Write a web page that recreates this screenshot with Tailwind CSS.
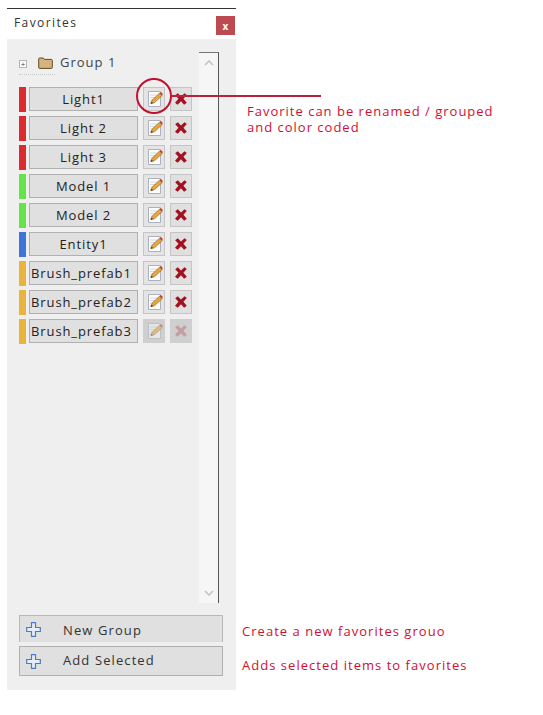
<!DOCTYPE html>
<html lang="en">
<head>
<meta charset="UTF-8" />
<title>Favorites</title>
<script src="https://cdn.jsdelivr.net/npm/@tailwindcss/browser@4"></script>
</head>
<body class="bg-white">
<svg width="0" height="0" class="absolute">
  <defs>
    <symbol id="edit" viewBox="0 0 18 18">
      <path d="M3.500 1.500h12v15h-12z" fill="#fdfdfd" stroke="#aab2c0" stroke-width="1"/>
      <path d="M5 5h7M5 7.500h5M5 10h3M5 12.500h2" stroke="#c8ccd4" stroke-width="0.8"/>
      <path d="M5.800 13.800l1.300-3.600 7.600-7.200 2.500 2.600-7.600 7z" fill="#eaa63c" stroke="#8f6324" stroke-width="0.7"/>
      <path d="M14.700 3l1.200-1.100 2 2-1.300 1.700z" fill="#c53a2e"/>
      <path d="M5.800 13.800l.6-2 1.800 1.200z" fill="#4d3c2a"/>
    </symbol>
    <symbol id="del" viewBox="0 0 12 12">
      <path d="M.2 2.300L2.800.3 6 3.400 9.500.2 11.800 2 8.400 5.800l3.400 4-2.700 2L6 8.200l-3.300 3.600L0 9.700l3.500-3.900z" fill="#a3101f"/>
    </symbol>
    <symbol id="plus" viewBox="0 0 15 15">
      <path d="M5.500.7h4v4.800h4.800v4h-4.800v4.800h-4v-4.800H.7v-4h4.800z" fill="#e6eef9" stroke="#4a7cc4" stroke-width="1.200"/>
    </symbol>
  </defs>
</svg>

<div class="relative flex w-[543px] h-[715px] pl-[7px] pt-[8px] font-['Open_Sans',sans-serif] overflow-hidden">
  <div class="w-[229px] h-[682px] flex flex-col border-t border-[#333]">
    <div class="h-[30px] flex justify-between items-start pl-[7px] pr-px">
      <span class="mt-[5px] text-[12px] leading-[18px] tracking-[1.4px] text-[#333]">Favorites</span>
      <span class="mt-[7px] w-[19px] h-[19px] flex items-center justify-center bg-[#bd4a50] text-white text-[10px] font-bold leading-none">x</span>
    </div>
    <div class="h-[651px] bg-[#efefef] flex flex-col pl-[12px] pr-[13px]">
      <div class="h-[551px] mt-[13px] flex">
        <div class="w-[180px] flex flex-col">
          <div class="h-[22px] flex items-center">
            <span class="w-[8px] h-[8px] mt-px flex items-center justify-center border border-[#b5b5b5] bg-white text-[8px] leading-none text-[#444]">+</span>
            <svg class="ml-[11px] w-[15px] h-[12px]" viewBox="0 0 15 12"><path d="M.7 10.500V2q0-1 1-1h3.600l1 1.400h7q1 0 1 1v7q0 1-1 1H1.700q-1 0-1-1z" fill="#d6b27c" stroke="#5d4a2c" stroke-width="1"/></svg>
            <span class="ml-[7px] text-[13px] tracking-[1px] text-[#444]">Group 1</span>
          </div>
          <div class="w-[36px] h-px mb-[12px] border-t border-dotted border-[#c8c8c8]"></div>
          <div class="flex flex-col gap-[5px]">
            <div class="flex items-center h-[24px]"><span class="w-[7px] h-[25px] bg-[#dc2b2f]"></span><span class="ml-[3px] w-[109px] h-[24px] flex items-center justify-center pt-px bg-[#e0e0e0] border border-[#b0b0b0] text-[13px] tracking-[0.9px] text-[#222]">Light1</span><span class="ml-[5px] w-[22px] h-[24px] flex items-center justify-center bg-[#e4e4e4] border border-[#c4c4c4]"><svg class="w-[18px] h-[18px]"><use href="#edit"/></svg></span><span class="ml-[5px] w-[22px] h-[24px] flex items-center justify-center bg-[#e0e0e0] border border-[#c4c4c4]"><svg class="w-[12px] h-[12px]"><use href="#del"/></svg></span></div>
            <div class="flex items-center h-[24px]"><span class="w-[7px] h-[25px] bg-[#dc2b2f]"></span><span class="ml-[3px] w-[109px] h-[24px] flex items-center justify-center pt-px bg-[#e0e0e0] border border-[#b0b0b0] text-[13px] tracking-[0.9px] text-[#222]">Light 2</span><span class="ml-[5px] w-[22px] h-[24px] flex items-center justify-center bg-[#e4e4e4] border border-[#c4c4c4]"><svg class="w-[18px] h-[18px]"><use href="#edit"/></svg></span><span class="ml-[5px] w-[22px] h-[24px] flex items-center justify-center bg-[#e0e0e0] border border-[#c4c4c4]"><svg class="w-[12px] h-[12px]"><use href="#del"/></svg></span></div>
            <div class="flex items-center h-[24px]"><span class="w-[7px] h-[25px] bg-[#dc2b2f]"></span><span class="ml-[3px] w-[109px] h-[24px] flex items-center justify-center pt-px bg-[#e0e0e0] border border-[#b0b0b0] text-[13px] tracking-[0.9px] text-[#222]">Light 3</span><span class="ml-[5px] w-[22px] h-[24px] flex items-center justify-center bg-[#e4e4e4] border border-[#c4c4c4]"><svg class="w-[18px] h-[18px]"><use href="#edit"/></svg></span><span class="ml-[5px] w-[22px] h-[24px] flex items-center justify-center bg-[#e0e0e0] border border-[#c4c4c4]"><svg class="w-[12px] h-[12px]"><use href="#del"/></svg></span></div>
            <div class="flex items-center h-[24px]"><span class="w-[7px] h-[25px] bg-[#62e44a]"></span><span class="ml-[3px] w-[109px] h-[24px] flex items-center justify-center pt-px bg-[#e0e0e0] border border-[#b0b0b0] text-[13px] tracking-[0.9px] text-[#222]">Model 1</span><span class="ml-[5px] w-[22px] h-[24px] flex items-center justify-center bg-[#e4e4e4] border border-[#c4c4c4]"><svg class="w-[18px] h-[18px]"><use href="#edit"/></svg></span><span class="ml-[5px] w-[22px] h-[24px] flex items-center justify-center bg-[#e0e0e0] border border-[#c4c4c4]"><svg class="w-[12px] h-[12px]"><use href="#del"/></svg></span></div>
            <div class="flex items-center h-[24px]"><span class="w-[7px] h-[25px] bg-[#62e44a]"></span><span class="ml-[3px] w-[109px] h-[24px] flex items-center justify-center pt-px bg-[#e0e0e0] border border-[#b0b0b0] text-[13px] tracking-[0.9px] text-[#222]">Model 2</span><span class="ml-[5px] w-[22px] h-[24px] flex items-center justify-center bg-[#e4e4e4] border border-[#c4c4c4]"><svg class="w-[18px] h-[18px]"><use href="#edit"/></svg></span><span class="ml-[5px] w-[22px] h-[24px] flex items-center justify-center bg-[#e0e0e0] border border-[#c4c4c4]"><svg class="w-[12px] h-[12px]"><use href="#del"/></svg></span></div>
            <div class="flex items-center h-[24px]"><span class="w-[7px] h-[25px] bg-[#3f74d8]"></span><span class="ml-[3px] w-[109px] h-[24px] flex items-center justify-center pt-px bg-[#e0e0e0] border border-[#b0b0b0] text-[13px] tracking-[0.9px] text-[#222]">Entity1</span><span class="ml-[5px] w-[22px] h-[24px] flex items-center justify-center bg-[#e4e4e4] border border-[#c4c4c4]"><svg class="w-[18px] h-[18px]"><use href="#edit"/></svg></span><span class="ml-[5px] w-[22px] h-[24px] flex items-center justify-center bg-[#e0e0e0] border border-[#c4c4c4]"><svg class="w-[12px] h-[12px]"><use href="#del"/></svg></span></div>
            <div class="flex items-center h-[24px]"><span class="w-[7px] h-[25px] bg-[#e8b43c]"></span><span class="ml-[3px] w-[109px] h-[24px] flex items-center pl-[1px] pt-px bg-[#e0e0e0] border border-[#b0b0b0] text-[13px] tracking-[0.9px] text-[#222]">Brush_prefab1</span><span class="ml-[5px] w-[22px] h-[24px] flex items-center justify-center bg-[#e4e4e4] border border-[#c4c4c4]"><svg class="w-[18px] h-[18px]"><use href="#edit"/></svg></span><span class="ml-[5px] w-[22px] h-[24px] flex items-center justify-center bg-[#e0e0e0] border border-[#c4c4c4]"><svg class="w-[12px] h-[12px]"><use href="#del"/></svg></span></div>
            <div class="flex items-center h-[24px]"><span class="w-[7px] h-[25px] bg-[#e8b43c]"></span><span class="ml-[3px] w-[109px] h-[24px] flex items-center pl-[1px] pt-px bg-[#e0e0e0] border border-[#b0b0b0] text-[13px] tracking-[0.9px] text-[#222]">Brush_prefab2</span><span class="ml-[5px] w-[22px] h-[24px] flex items-center justify-center bg-[#e4e4e4] border border-[#c4c4c4]"><svg class="w-[18px] h-[18px]"><use href="#edit"/></svg></span><span class="ml-[5px] w-[22px] h-[24px] flex items-center justify-center bg-[#e0e0e0] border border-[#c4c4c4]"><svg class="w-[12px] h-[12px]"><use href="#del"/></svg></span></div>
            <div class="flex items-center h-[24px]"><span class="w-[7px] h-[25px] bg-[#e8b43c]"></span><span class="ml-[3px] w-[109px] h-[24px] flex items-center pl-[1px] pt-px bg-[#e0e0e0] border border-[#b0b0b0] text-[13px] tracking-[0.9px] text-[#222]">Brush_prefab3</span><span class="ml-[5px] w-[22px] h-[24px] flex items-center justify-center bg-[#cfcfcf]"><svg class="w-[18px] h-[18px] opacity-50"><use href="#edit"/></svg></span><span class="ml-[5px] w-[22px] h-[24px] flex items-center justify-center bg-[#cfcfcf]"><svg class="w-[12px] h-[12px] opacity-25"><use href="#del"/></svg></span></div>
          </div>
        </div>
        <div class="w-[20px] h-[551px] flex flex-col items-center justify-between py-[7px] bg-[#f6f6f6] border-t border-r border-t-[#777] border-r-[#555]">
          <svg class="w-[10px] h-[6px]" viewBox="0 0 10 6"><path d="M1 5l4-4 4 4" fill="none" stroke="#c2c2c2" stroke-width="1.500"/></svg>
          <svg class="w-[10px] h-[6px]" viewBox="0 0 10 6"><path d="M1 1l4 4 4-4" fill="none" stroke="#c2c2c2" stroke-width="1.500"/></svg>
        </div>
      </div>
      <div class="mt-[12px] w-[204px] h-[27px] flex items-center bg-[#e0e0e0] border-t border-x border-[#b8b8b8]">
        <svg class="ml-[6px] w-[15px] h-[15px]"><use href="#plus"/></svg>
        <span class="ml-[22px] pt-[3px] text-[13px] tracking-[1.1px] text-[#333]">New Group</span>
      </div>
      <div class="mt-[4px] w-[204px] h-[30px] flex items-center bg-[#e0e0e0] border border-[#b0b0b0]">
        <svg class="ml-[6px] w-[15px] h-[15px]"><use href="#plus"/></svg>
        <span class="ml-[22px] text-[13px] tracking-[1.1px] text-[#333]">Add Selected</span>
      </div>
    </div>
  </div>

  <!-- callouts -->
  <div class="absolute left-[136px] top-[78px] w-[36px] h-[36px] rounded-full border-2 border-[#c2102e]"></div>
  <div class="absolute left-[171px] top-[95px] w-[150px] h-[2px] bg-[#b8223c]"></div>
  <p class="absolute left-[247px] top-[103px] text-[13px] leading-[16px] tracking-[1px] text-[#d01030]">Favorite can be renamed / grouped<br>and color coded</p>
  <p class="absolute left-[242px] top-[623px] text-[13px] leading-[16px] tracking-[1.03px] text-[#d01030]">Create a new favorites grouo</p>
  <p class="absolute left-[242px] top-[657px] text-[13px] leading-[16px] tracking-[1.03px] text-[#d01030]">Adds selected items to favorites</p>
</div>
</body>
</html>
